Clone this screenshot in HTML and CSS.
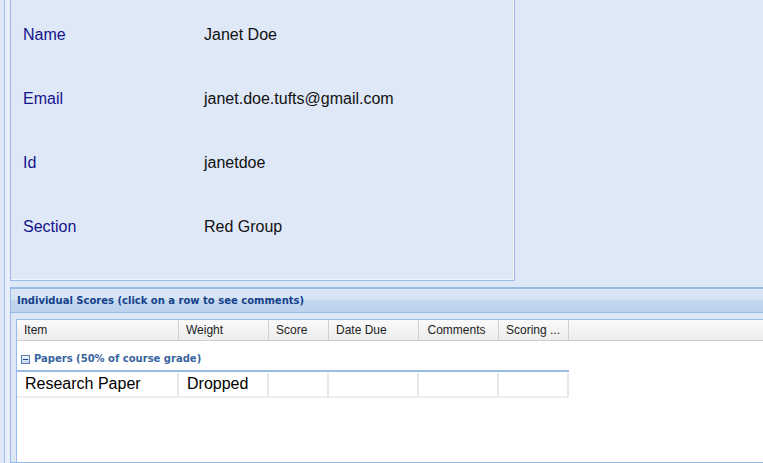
FILE: index.html
```html
<!DOCTYPE html>
<html>
<head>
<meta charset="utf-8">
<link rel="stylesheet" href="styles.css">
</head>
<body>
<div class="frame">
  <div class="content">
    <div class="top-row">
      <div class="info-panel">
        <div class="info-row"><span class="label">Name</span><span class="value">Janet Doe</span></div>
        <div class="info-row"><span class="label">Email</span><span class="value">janet.doe.tufts@gmail.com</span></div>
        <div class="info-row"><span class="label">Id</span><span class="value">janetdoe</span></div>
        <div class="info-row"><span class="label">Section</span><span class="value">Red Group</span></div>
      </div>
    </div>
    <div class="scores-panel">
      <div class="panel-header">Individual Scores (click on a row to see comments)</div>
      <div class="panel-body">
        <div class="grid">
          <div class="grid-head">
            <div class="hcell c-item">Item</div>
            <div class="hcell c-weight">Weight</div>
            <div class="hcell c-score">Score</div>
            <div class="hcell c-date">Date Due</div>
            <div class="hcell c-comments center">Comments</div>
            <div class="hcell c-scoring">Scoring ...</div>
            <div class="hcell c-fill"></div>
          </div>
          <div class="group">
            <div class="group-title"><span class="toggle"></span>Papers (50% of course grade)</div>
            <div class="group-row">
              <div class="cell c-item">Research Paper</div>
              <div class="cell c-weight">Dropped</div>
              <div class="cell c-score"></div>
              <div class="cell c-date"></div>
              <div class="cell c-comments"></div>
              <div class="cell c-scoring"></div>
            </div>
          </div>
        </div>
      </div>
    </div>
  </div>
</div>
</body>
</html>
```
FILE: styles.css
```css
html, body {
  margin: 0;
  padding: 0;
  height: 100%;
  overflow: hidden;
  background: #dfe8f6;
}
body {
  font-family: "Liberation Sans", Arial, sans-serif;
}
.frame {
  margin-left: 4px;
  border-left: 1px solid #99bbe8;
  padding-left: 5px;
  background: #e9eff8;
  height: 463px;
  display: flex;
}
.content {
  flex: 1;
  display: flex;
  flex-direction: column;
  background: #dfe8f6;
  min-width: 0;
}
.top-row {
  height: 287px;
  flex: none;
  display: flex;
  align-items: flex-start;
}
.info-panel {
  width: 505px;
  height: 281px;
  box-sizing: border-box;
  border: 1px solid #99bbe8;
  border-top: none;
  box-shadow: inset -1px -1px 0 #f3f6fb;
  padding: 2px 0 0 12px;
  display: flex;
  flex-direction: column;
}
.info-row {
  height: 64px;
  display: flex;
  align-items: center;
  font-family: "Liberation Sans", Tahoma, sans-serif;
  font-size: 16px;
  padding-top: 1px;
  box-sizing: border-box;
}
.label {
  width: 181px;
  color: #14148c;
}
.value {
  color: #111;
}
.scores-panel {
  flex: 1;
  border: 1px solid #99bbe8;
  border-top-width: 2px;
  border-right: none;
  display: flex;
  flex-direction: column;
  min-height: 0;
}
.panel-header {
  height: 24px;
  flex: none;
  box-sizing: border-box;
  border-bottom: 1px solid #99bbe8;
  background: linear-gradient(#dce7f6 0%, #d5e3f4 45%, #c4d7ef 50%, #bdd2ed 100%);
  color: #15428b;
  font-family: "DejaVu Sans", Tahoma, sans-serif;
  font-weight: bold;
  font-size: 10px;
  padding: 6px 0 0 6px;
}
.panel-body {
  flex: 1;
  padding: 6px 0 0 5px;
  display: flex;
  min-height: 0;
}
.grid {
  flex: 1;
  border: 1px solid #99bbe8;
  border-right: none;
  border-bottom: none;
  background: #fff;
}
.grid-head {
  display: flex;
  height: 21px;
  box-sizing: border-box;
  border-bottom: 1px solid #d0d0d0;
  background: linear-gradient(#fafafa, #ededed);
}
.hcell {
  box-sizing: border-box;
  border-right: 1px solid #d0d0d0;
  font-size: 12px;
  color: #222;
  padding: 3px 0 0 7px;
  white-space: nowrap;
  overflow: hidden;
}
.hcell.center {
  text-align: center;
  padding-left: 0;
  padding-right: 4px;
}
.c-item { width: 162px; }
.c-weight { width: 90px; }
.c-score { width: 60px; }
.c-date { width: 90px; }
.c-comments { width: 80px; }
.c-scoring { width: 70px; }
.hcell.c-fill { flex: 1; border-right: none; }
.group {
  width: 552px;
}
.group-title {
  height: 31px;
  box-sizing: border-box;
  padding: 12px 0 0 4px;
  border-bottom: 2px solid #99bbe8;
  color: #3764a0;
  font-family: "DejaVu Sans", Tahoma, sans-serif;
  font-weight: bold;
  font-size: 10px;
  display: flex;
  align-items: flex-start;
}
.toggle {
  width: 9px;
  height: 9px;
  box-sizing: border-box;
  border: 1px solid #5a7bb3;
  background: linear-gradient(#f2f6fc, #c5d6ee);
  margin: 2px 4px 0 0;
  position: relative;
}
.toggle::after {
  content: "";
  position: absolute;
  left: 1px;
  right: 1px;
  top: 3px;
  height: 1px;
  background: #23468a;
}
.group-row {
  display: flex;
  height: 25px;
  box-sizing: border-box;
  border-bottom: 2px solid #ededed;
  margin-top: 1px;
}
.cell {
  box-sizing: border-box;
  border-right: 2px solid #e6e6ee;
  font-size: 16px;
  color: #000;
  padding: 2px 0 0 8px;
  white-space: nowrap;
}
```
